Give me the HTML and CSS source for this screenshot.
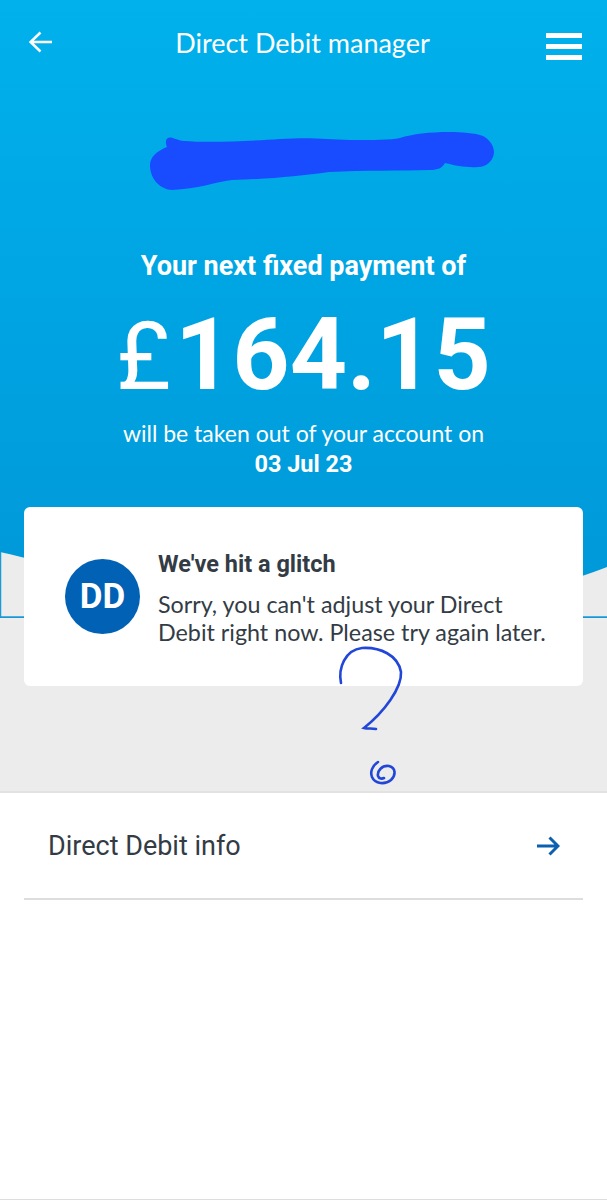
FILE: index.html
```html
<!DOCTYPE html>
<html lang="en-GB">
<head>
  <meta charset="UTF-8">
  <meta name="viewport" content="width=device-width, initial-scale=1.0">
  <title>Direct Debit manager</title>
  <link rel="stylesheet" href="styles.css">
</head>
<body>

  <div class="top">
    <div class="backdrop">
      <svg class="wave" viewBox="0 0 607 66" preserveAspectRatio="none">
        <path d="M0 0 C60 14 110 26 190 37 C300 50 470 52 545 34 C570 28 590 22 607 15 L607 65 L0 65 Z" fill="#ececec"/>
        <path d="M0.5 0 L0.5 65 L607 65" fill="none" stroke="#1a9ad6" stroke-width="1.5"/>
      </svg>
    </div>

    <header class="nav">
      <svg class="nav-back" viewBox="0 0 24 22">
        <path d="M23 11 H2 M11.5 1.5 L1.5 11 L11.5 20.500" fill="none" stroke="#fff" stroke-width="2.600"/>
      </svg>
      <h1>Direct Debit manager</h1>
      <div class="burger"><span></span><span></span><span></span></div>
    </header>

    <svg class="redacted" viewBox="0 0 344 58">
      <path d="M18 6 C21 4 26 8 34 9 C60 11 100 9 130 7 C160 5 175 7 200 8 C225 8 240 8 250 6 C262 2 280 0 299 0 C312 0 325 1 333 4 C342 9 346 18 343 25 C339 34 332 36 320 35 C310 35 300 32 295 31 C292 36 288 38 280 38 C250 39 215 38 179 40 C150 44 120 47 82 48 C65 50 48 57 22 58 C8 57 0 45 0 33 C0 25 7 19 17 15 C15 10 16 7 18 6 Z" fill="#1a4cff"/>
    </svg>

    <section class="summary">
      <p class="summary-lead">Your next fixed payment of</p>
      <p class="amount"><span class="amount-sign">£</span>164.15</p>
      <p class="summary-note">will be taken out of your account on</p>
      <p class="summary-date">03 Jul 23</p>
    </section>

    <div class="card">
      <div class="dd-badge">DD</div>
      <div class="card-text">
        <h2>We've hit a glitch</h2>
        <p>Sorry, you can't adjust your Direct Debit right now. Please try again later.</p>
      </div>
    </div>
  </div>

  <a class="row" href="#">
    <span>Direct Debit info</span>
    <svg class="row-arrow" viewBox="0 0 24 20">
      <path d="M1 10 H22 M13.500 1.500 L22 10 L13.500 18.500" fill="none" stroke="#0a5fb0" stroke-width="3"/>
    </svg>
  </a>

  <svg class="scribble" viewBox="0 0 607 1200">
    <path d="M341 683 C338 668 345 650 362 648 C380 647 398 655 401 672 C402 688 384 712 364 728 C368 729 372 728 376 729" fill="none" stroke="#2146d8" stroke-width="2.600" stroke-linecap="round"/>
    <path d="M378 762 C372 766 370 772 372 777 C375 784 385 785 391 780 C396 775 396 768 389 766 C382 765 377 771 378 776 C379 779 382 779 384 778" fill="none" stroke="#2146d8" stroke-width="2.600" stroke-linecap="round"/>
  </svg>

</body>
</html>
```

FILE: styles.css
```css
* { box-sizing: border-box; }
html, body { height: 100%; }
body {
  margin: 0;
  position: relative;
  height: 1200px;
  overflow: hidden;
  background: white;
  border-bottom: 1px solid #ddd;
  font-family: 'Roboto', sans-serif;
  color: #333c45;
}
h1, h2, p { margin: 0; }

.top {
  position: relative;
  height: 793px;
  padding: 0 24px;
  background: #ececec;
  border-bottom: 2px solid #e2e2e2;
}
.backdrop {
  position: absolute;
  top: 0;
  left: 0;
  right: 0;
  height: 618px;
  background: linear-gradient(to bottom, #00b1ec 0%, #0097d8 100%);
}
.wave {
  position: absolute;
  left: 0;
  bottom: 0;
  width: 100%;
  height: 66px;
  display: block;
}
.nav, .redacted, .summary, .card { position: relative; }

.nav {
  display: flex;
  align-items: center;
  justify-content: space-between;
  height: 86px;
  padding: 0 1px 0 5px;
}
.nav-back { width: 24px; height: 22px; margin-top: -2px; }
.nav h1 {
  font-family: 'Lato', sans-serif;
  font-weight: 400;
  font-size: 27px;
  color: white;
  margin: -2px 0 0 6px;
}
.burger {
  display: flex;
  flex-direction: column;
  gap: 6px;
  width: 36px;
  margin-top: 6px;
}
.burger span { height: 5px; background: white; }

.redacted {
  display: block;
  width: 344px;
  height: 58px;
  margin: 46px 0 0 126px;
}

.summary {
  margin-top: 59px;
  text-align: center;
  color: white;
}
.summary-lead { font-size: 27px; font-weight: 700; line-height: 34px; }
.amount {
  font-size: 100px;
  font-weight: 700;
  line-height: 118px;
  margin-top: 13px;
}
.amount-sign { font-size: 94px; font-weight: 400; margin-right: 4px; }
.summary-note {
  font-family: 'Lato', sans-serif;
  font-size: 23px;
  line-height: 30px;
  margin-top: 2px;
}
.summary-date { font-size: 23.500px; font-weight: 700; line-height: 32px; }

.card {
  display: flex;
  align-items: flex-start;
  gap: 18px;
  height: 179px;
  margin-top: 27px;
  padding: 42px 37px 0 41px;
  background: white;
  border-radius: 6px;
}
.dd-badge {
  flex: none;
  width: 75px;
  height: 75px;
  margin-top: 10px;
  border-radius: 50%;
  background: #0061b5;
  color: white;
  font-size: 35px;
  font-weight: 700;
  line-height: 75px;
  text-align: center;
}
.card-text { flex: 1; margin-right: -12px; }
.card-text h2 { font-size: 23.500px; font-weight: 700; line-height: 30px; }
.card-text p {
  font-family: 'Lato', sans-serif;
  font-size: 23.300px;
  line-height: 28px;
  margin-top: 11px;
}

.row {
  display: flex;
  align-items: center;
  justify-content: space-between;
  height: 107px;
  margin: 0 24px;
  padding: 1px 23px 0 24px;
  border-bottom: 2px solid #ddd;
  color: #333c45;
  font-size: 27px;
  text-decoration: none;
}
.row-arrow { width: 24px; height: 20px; }

.scribble {
  position: absolute;
  top: 0;
  left: 0;
  width: 607px;
  height: 1200px;
  pointer-events: none;
}
```
